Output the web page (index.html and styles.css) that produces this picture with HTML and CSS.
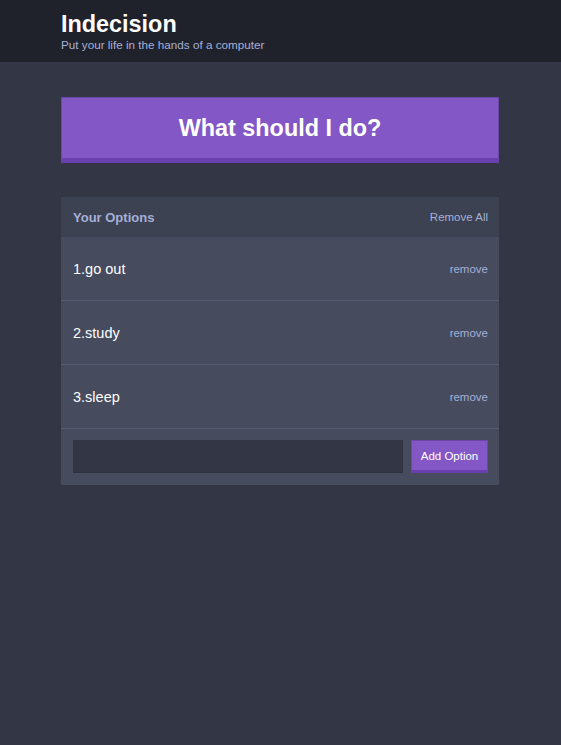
FILE: index.html
```html
<!DOCTYPE html>
<html>
<head>
<meta charset="utf-8">
<link rel="stylesheet" href="styles.css">
</head>
<body>
<header class="header">
  <div class="container">
    <h1 class="header__title">Indecision</h1>
    <h2 class="header__subtitle">Put your life in the hands of a computer</h2>
  </div>
</header>
<main class="container">
  <button class="big-button">What should I do?</button>
  <div class="widget">
    <div class="widget-header">
      <h3 class="widget-header__title">Your Options</h3>
      <button class="button--link">Remove All</button>
    </div>
    <div class="option">
      <p class="option__text">1.go out</p>
      <button class="button--link">remove</button>
    </div>
    <div class="option">
      <p class="option__text">2.study</p>
      <button class="button--link">remove</button>
    </div>
    <div class="option">
      <p class="option__text">3.sleep</p>
      <button class="button--link">remove</button>
    </div>
    <form class="add-option">
      <input class="add-option__input" type="text" name="option">
      <button class="button" type="button">Add Option</button>
    </form>
  </div>
</main>
</body>
</html>
```
FILE: styles.css
```css
* { box-sizing: border-box; }
html, body { margin: 0; padding: 0; }
body {
  background: #333745;
  font-family: "Liberation Sans", Arial, sans-serif;
  color: #fff;
  height: 745px;
}
.container {
  width: 438px;
  margin: 0 61px;
}
.header {
  background: #20222b;
  height: 62px;
  padding-top: 10px;
}
.header__title {
  margin: 0;
  font-size: 23.4px;
  line-height: 28px;
  font-weight: bold;
  color: #fff;
}
.header__subtitle {
  margin: 0;
  font-size: 11.7px;
  line-height: 13px;
  font-weight: normal;
  color: #a5afd7;
}
.big-button {
  display: block;
  width: 100%;
  margin: 35px 0 34px;
  height: 66px;
  background: #8357c5;
  border: 1px solid #6c47a8;
  border-bottom: 5px solid #6a40ae;
  color: #fff;
  font-family: inherit;
  font-weight: bold;
  font-size: 23.4px;
  padding: 0;
  padding-top: 1px;
}
.widget {
  background: #464b5e;
}
.widget-header {
  background: #3c4251;
  height: 40px;
  display: flex;
  align-items: center;
  justify-content: space-between;
  padding: 0 11px 0 12px;
}
.widget-header__title {
  margin: 0;
  font-size: 13px;
  font-weight: bold;
  color: #a5afd7;
}
.button--link {
  background: none;
  border: none;
  padding: 0;
  font-family: inherit;
  font-size: 11.5px;
  color: #a5afd7;
}
.option {
  height: 64px;
  display: flex;
  align-items: center;
  justify-content: space-between;
  padding: 0 11px 0 12px;
  border-bottom: 1px solid #565b70;
}
.option__text {
  margin: 0;
  font-size: 14.5px;
  color: #fff;
}
.add-option {
  display: flex;
  align-items: stretch;
  gap: 8px;
  padding: 11px 11px 12px 12px;
  margin: 0;
}
.add-option__input {
  flex: 1;
  height: 33px;
  background: #333745;
  border: none;
  border-bottom: 1px solid #2e313d;
  margin: 0;
  color: #fff;
}
.button {
  width: 77px;
  height: 33px;
  background: #8357c5;
  border: 1px solid #6c47a8;
  border-bottom: 3px solid #6a40ae;
  color: #fff;
  font-family: inherit;
  font-size: 11.5px;
  padding: 0;
}
```
